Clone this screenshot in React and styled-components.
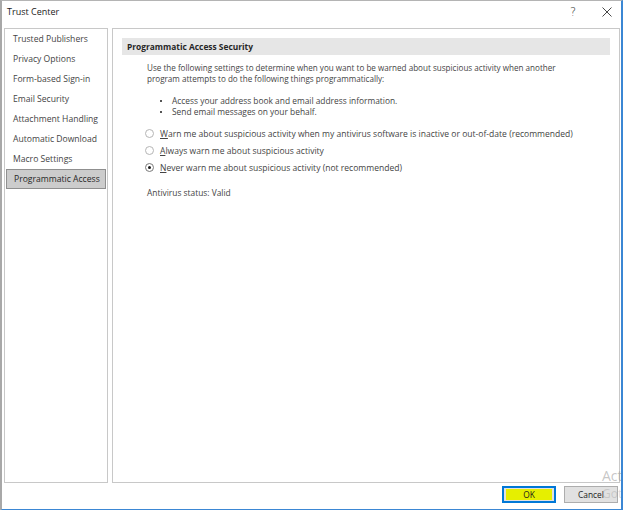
import React from "react";
import styled, { createGlobalStyle } from "styled-components";

const GlobalStyle = createGlobalStyle`
  html, body {
    margin: 0;
    padding: 0;
    background: #ffffff;
  }
  body {
    font-family: "Open Sans", "Liberation Sans", sans-serif;
  }
`;

const NAV_ITEMS = [
  "Trusted Publishers",
  "Privacy Options",
  "Form-based Sign-in",
  "Email Security",
  "Attachment Handling",
  "Automatic Download",
  "Macro Settings",
  "Programmatic Access",
];

const OPTIONS = [
  { key: "W", rest: "arn me about suspicious activity when my antivirus software is inactive or out-of-date (recommended)", checked: false },
  { key: "A", rest: "lways warn me about suspicious activity", checked: false },
  { key: "N", rest: "ever warn me about suspicious activity (not recommended)", checked: true },
];

export default function App() {
  return (
    <>
      <GlobalStyle />
      <Window>
        <TitleBar>
          <Title>Trust Center</Title>
          <TitleButtons>
            <HelpGlyph>?</HelpGlyph>
            <CloseIcon viewBox="0 0 10 10">
              <path d="M0.5 0.5 L9.5 9.5 M9.5 0.5 L0.5 9.5" stroke="#333" strokeWidth="0.9" fill="none" />
            </CloseIcon>
          </TitleButtons>
        </TitleBar>

        <Body>
          <Nav>
            {NAV_ITEMS.map((item) => (
              <NavItem key={item} $active={item === "Programmatic Access"}>
                {item}
              </NavItem>
            ))}
          </Nav>

          <Content>
            <SectionHeader>Programmatic Access Security</SectionHeader>
            <SectionBody>
              <Paragraph>
                Use the following settings to determine when you want to be warned about suspicious activity when another
                <br />
                program attempts to do the following things programmatically:
              </Paragraph>
              <BulletList>
                <li>Access your address book and email address information.</li>
                <li>Send email messages on your behalf.</li>
              </BulletList>
              <RadioGroup>
                {OPTIONS.map((opt) => (
                  <RadioRow key={opt.key}>
                    <RadioCircle $checked={opt.checked} />
                    <span>
                      <AccessKey>{opt.key}</AccessKey>
                      {opt.rest}
                    </span>
                  </RadioRow>
                ))}
              </RadioGroup>
              <Status>Antivirus status: Valid</Status>
            </SectionBody>
          </Content>
        </Body>

        <Footer>
          <OkButton>
            <Highlight>OK</Highlight>
          </OkButton>
          <Button>Cancel</Button>
        </Footer>

        <Watermark>
          <span>Act</span>
          <small>Got</small>
        </Watermark>
      </Window>
    </>
  );
}

const Window = styled.div`
  position: relative;
  width: 619px;
  height: 508px;
  display: flex;
  flex-direction: column;
  background: #ffffff;
  border-left: 2px solid #a8a8a8;
  border-top: 1px solid #b4b4b4;
  border-right: 2px solid #3b87d4;
  border-bottom: 2px solid #3b87d4;
  overflow: hidden;
  color: #444444;
  font-size: 8.4px;
`;

const TitleBar = styled.div`
  height: 25px;
  box-sizing: border-box;
  display: flex;
  align-items: center;
  justify-content: space-between;
  padding: 0 9px 4px 5px;
`;

const Title = styled.div`
  color: #1a1a1a;
  font-size: 9px;
`;

const TitleButtons = styled.div`
  display: flex;
  align-items: center;
  gap: 26px;
`;

const HelpGlyph = styled.span`
  color: #333333;
  font-size: 11.5px;
  font-family: "DejaVu Sans", sans-serif;
  font-weight: 300;
`;

const CloseIcon = styled.svg`
  width: 10px;
  height: 10px;
`;

const Body = styled.div`
  display: flex;
  gap: 4px;
  padding: 2px 1px 0 2px;
  height: 455px;
`;

const Nav = styled.div`
  width: 102px;
  display: flex;
  flex-direction: column;
  border: 1px solid #c8c8c8;
`;

const NavItem = styled.div`
  height: 20px;
  display: flex;
  align-items: center;
  padding-left: 8px;
  white-space: nowrap;
  color: #444444;
  font-size: 8.6px;
  box-sizing: border-box;
  ${(p) =>
    p.$active &&
    `
    margin: 0 1px;
    padding-left: 7px;
    background: #cccccc;
    border: 1px solid #8f8f8f;
    color: #262626;
  `}
`;

const Content = styled.div`
  flex: 1;
  display: flex;
  flex-direction: column;
  padding: 9px 9px 0 9px;
  border: 1px solid #c8c8c8;
`;

const SectionHeader = styled.div`
  height: 17px;
  display: flex;
  align-items: center;
  padding-left: 5px;
  background: #e6e6e6;
  color: #262626;
  font-weight: 700;
`;

const SectionBody = styled.div`
  display: flex;
  flex-direction: column;
  padding: 7px 0 0 25px;
`;

const Paragraph = styled.div`
  font-size: 8.1px;
  line-height: 11px;
  white-space: nowrap;
`;

const BulletList = styled.ul`
  margin: 11px 0 0 0;
  padding: 0 0 0 25px;
  line-height: 11px;
  list-style: none;

  li {
    position: relative;
  }

  li::before {
    content: "";
    position: absolute;
    left: -12px;
    top: 5px;
    width: 2px;
    height: 2px;
    background: #555555;
  }
`;

const RadioGroup = styled.div`
  display: flex;
  flex-direction: column;
  margin: 8px 0 0 -2px;
`;

const RadioRow = styled.div`
  height: 17px;
  display: flex;
  align-items: center;
  gap: 6px;
  white-space: nowrap;
  font-size: 8.55px;
`;

const RadioCircle = styled.span`
  position: relative;
  width: 9px;
  height: 9px;
  box-sizing: border-box;
  border-radius: 50%;
  border: 1px solid ${(p) => (p.$checked ? "#7a7a7a" : "#b5b5b5")};
  background: #ffffff;

  &::after {
    content: "";
    display: ${(p) => (p.$checked ? "block" : "none")};
    position: absolute;
    left: 2px;
    top: 2px;
    width: 3px;
    height: 3px;
    border-radius: 50%;
    background: #1a1a1a;
  }
`;

const AccessKey = styled.span`
  text-decoration: underline;
`;

const Status = styled.div`
  margin-top: 11px;
`;

const Footer = styled.div`
  flex: 1;
  display: flex;
  justify-content: flex-end;
  align-items: flex-start;
  gap: 8px;
  padding: 3px 3px 0 0;
`;

const Button = styled.div`
  width: 54px;
  height: 17px;
  box-sizing: border-box;
  display: flex;
  align-items: center;
  justify-content: center;
  background: #e1e1e1;
  border: 1px solid #adadad;
  color: #1a1a1a;
`;

const OkButton = styled(Button)`
  border: 2px solid #0078d7;
  padding: 1px 2px;
`;

const Highlight = styled.div`
  flex: 1;
  align-self: stretch;
  display: flex;
  align-items: center;
  justify-content: center;
  background: #e6ef00;
`;

const Watermark = styled.div`
  position: absolute;
  left: 600px;
  top: 467px;
  display: flex;
  flex-direction: column;
  line-height: 16px;
  color: rgba(150, 150, 150, 0.55);
  font-size: 14px;
  pointer-events: none;

  small {
    font-size: 12px;
    margin-top: 2px;
    color: rgba(150, 150, 150, 0.35);
  }
`;
